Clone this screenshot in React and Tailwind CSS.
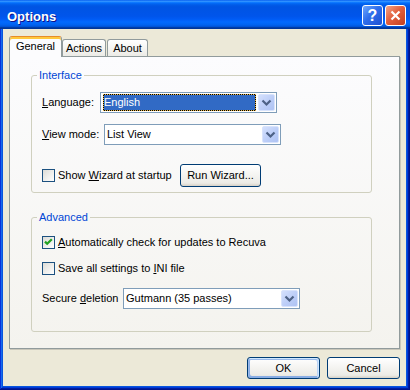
import React from "react";

function Combo({ value, selected }) {
  return (
    <div className="w-[177px] h-[21px] border border-[#7F9DB9] bg-white flex p-px">
      {selected ? (
        <div className="flex-1 ml-px mr-[2px] bg-black border border-dotted border-[#E8B84A]">
          <div className="w-full h-full bg-[#316AC5] text-white flex items-center">{value}</div>
        </div>
      ) : (
        <div className="flex-1 flex items-center pl-px">{value}</div>
      )}
      <div className="w-[17px] h-[17px] rounded-[2px] border border-[#D8E3FC] bg-[linear-gradient(135deg,#D4E0FD,#BACCF7_60%,#AFC3F3)] flex items-center justify-center">
        <svg width="15" height="15" viewBox="0 0 15 15">
          <path d="M3.5 5.5 L7.5 9.5 L11.5 5.5" fill="none" stroke="#4D6185" strokeWidth="2.2" />
        </svg>
      </div>
    </div>
  );
}

function Check({ checked }) {
  return (
    <div className="w-[13px] h-[13px] shrink-0 border border-[#1C5180] bg-[linear-gradient(135deg,#DCDCD7,#FFFFFF)] flex items-center justify-center">
      {checked && (
        <svg width="11" height="11" viewBox="0 0 11 11">
          <path d="M2 4.6 L4.2 6.8 L8.8 2.2" fill="none" stroke="#21A121" strokeWidth="2.2" />
        </svg>
      )}
    </div>
  );
}

function Btn({ children, w, def }) {
  return (
    <div
      className={
        "h-[22px] rounded-[3px] border border-[#003C74] bg-[linear-gradient(180deg,#FFFFFF,#ECEBE6_86%,#D6D0C5)] flex items-center justify-center " +
        w +
        (def
          ? " shadow-[inset_-1px_1px_#cee7ff,inset_1px_2px_#98b8ea,inset_-2px_2px_#bcd4f6,inset_1px_-1px_#89ade4,inset_2px_-2px_#89ade4]"
          : "")
      }
    >
      {children}
    </div>
  );
}

export default function App() {
  return (
    <div className="w-[410px] h-[390px] flex flex-col bg-[#0855DD] shadow-[inset_-1px_-1px_#00138c,inset_1px_1px_#0831d9,inset_-2px_-2px_#001ea0,inset_2px_2px_#166aee,inset_-3px_-3px_#003bda,inset_3px_3px_#0855dd] font-['Liberation_Sans',Arial,sans-serif] text-[11px] leading-[13px] text-black">
      {/* Title bar */}
      <div className="h-[29px] shrink-0 flex items-center pt-[2px] pl-[7px] pr-[4px] bg-[linear-gradient(180deg,#0058ee_0%,#3593ff_4%,#288eff_6%,#127dff_8%,#036ffc_10%,#0262ee_14%,#0057e5_20%,#0054e3_24%,#0055eb_56%,#005bf5_66%,#026afe_76%,#0062ef_86%,#0052d6_92%,#0040ab_94%,#003092_100%)]">
        <div className="flex-1 mt-[2px] text-white font-bold text-[13px] leading-[15px] [text-shadow:1px_1px_#0F1089]">
          Options
        </div>
        <div className="flex gap-[2px]">
          <div className="w-[21px] h-[21px] rounded-[3px] border border-white bg-[linear-gradient(135deg,#6FA8FF,#2F6EEB_45%,#1E50D2)] flex items-center justify-center text-white font-bold text-[16px] leading-[16px]">
            ?
          </div>
          <div className="w-[21px] h-[21px] rounded-[3px] border border-white bg-[linear-gradient(135deg,#F3A486,#E2603E_45%,#C23F1E)] flex items-center justify-center">
            <svg width="13" height="13" viewBox="0 0 13 13">
              <path d="M2.5 2.5 L10.5 10.5 M10.5 2.5 L2.5 10.5" stroke="white" strokeWidth="2.2" />
            </svg>
          </div>
        </div>
      </div>

      {/* Body */}
      <div className="flex-1 ml-[3px] mr-[4px] mb-[4px] bg-[#ECE9D8] flex flex-col pl-[6px] pt-[7px]">
        {/* Tabs */}
        <div className="flex items-end h-[20px] relative z-10">
          <div className="w-[53px] h-[21px] -mb-px bg-[#FCFCFE] border-x border-[#919B9C] border-t border-t-[#E68B2C] rounded-t-[3px] shadow-[inset_0_2px_#FFC83C] flex justify-center pt-[3px]">
            General
          </div>
          <div className="w-[44px] h-[17px] bg-[linear-gradient(180deg,#FFFFFF,#ECEBE6)] border-x border-t border-[#919B9C] rounded-t-[3px] flex justify-center pt-[2px]">
            Actions
          </div>
          <div className="w-[41px] ml-px h-[17px] bg-[linear-gradient(180deg,#FFFFFF,#ECEBE6)] border-x border-t border-[#919B9C] rounded-t-[3px] flex justify-center pt-[2px]">
            About
          </div>
        </div>

        {/* Panel */}
        <div className="w-[391px] h-[293px] border border-[#919B9C] bg-[linear-gradient(180deg,#FCFCFE,#F4F3EE)] shadow-[1px_1px_#C9C7BA] pl-[21px] pt-[12px]">
          <fieldset className="w-[341px] border border-[#D0D0BF] rounded-[3px]">
            <legend className="ml-[5px] px-[2px] text-[#0046D5]">Interface</legend>
            <div className="pl-[10px] pt-[10px] pb-[5px]">
              <div className="flex items-center h-[21px]">
                <span className="w-[58px]">
                  <u>L</u>anguage:
                </span>
                <Combo value="English" selected />
              </div>
              <div className="flex items-center h-[21px] mt-[11px]">
                <span className="w-[62px]">
                  <u>V</u>iew mode:
                </span>
                <Combo value="List View" />
              </div>
              <div className="flex items-center h-[23px] mt-[19px]">
                <div className="w-[138px] flex items-center gap-[3px]">
                  <Check />
                  <span>
                    Show <u>W</u>izard at startup
                  </span>
                </div>
                <div className="w-[81px] h-[23px] rounded-[3px] border border-[#003C74] bg-[linear-gradient(180deg,#FFFFFF,#ECEBE6_86%,#D6D0C5)] flex items-center justify-center">
                  Run Wizard...
                </div>
              </div>
            </div>
          </fieldset>

          <fieldset className="w-[341px] mt-[18px] border border-[#D0D0BF] rounded-[3px]">
            <legend className="ml-[5px] px-[2px] text-[#0046D5]">Advanced</legend>
            <div className="pl-[10px] pt-[10px] pb-[22px]">
              <div className="flex items-center h-[17px] gap-[3px]">
                <Check checked />
                <span>
                  <u>A</u>utomatically check for updates to Recuva
                </span>
              </div>
              <div className="flex items-center h-[17px] gap-[3px] mt-[9px]">
                <Check />
                <span>
                  Save all settings to <u>I</u>NI file
                </span>
              </div>
              <div className="flex items-center h-[21px] mt-[11px]">
                <span className="w-[81px]">
                  Secure <u>d</u>eletion
                </span>
                <Combo value="Gutmann (35 passes)" />
              </div>
            </div>
          </fieldset>
        </div>

        {/* Buttons */}
        <div className="w-[391px] mt-[8px] flex justify-end gap-[7px]">
          <Btn w="w-[73px]" def>
            OK
          </Btn>
          <Btn w="w-[73px]">Cancel</Btn>
        </div>
      </div>
    </div>
  );
}
